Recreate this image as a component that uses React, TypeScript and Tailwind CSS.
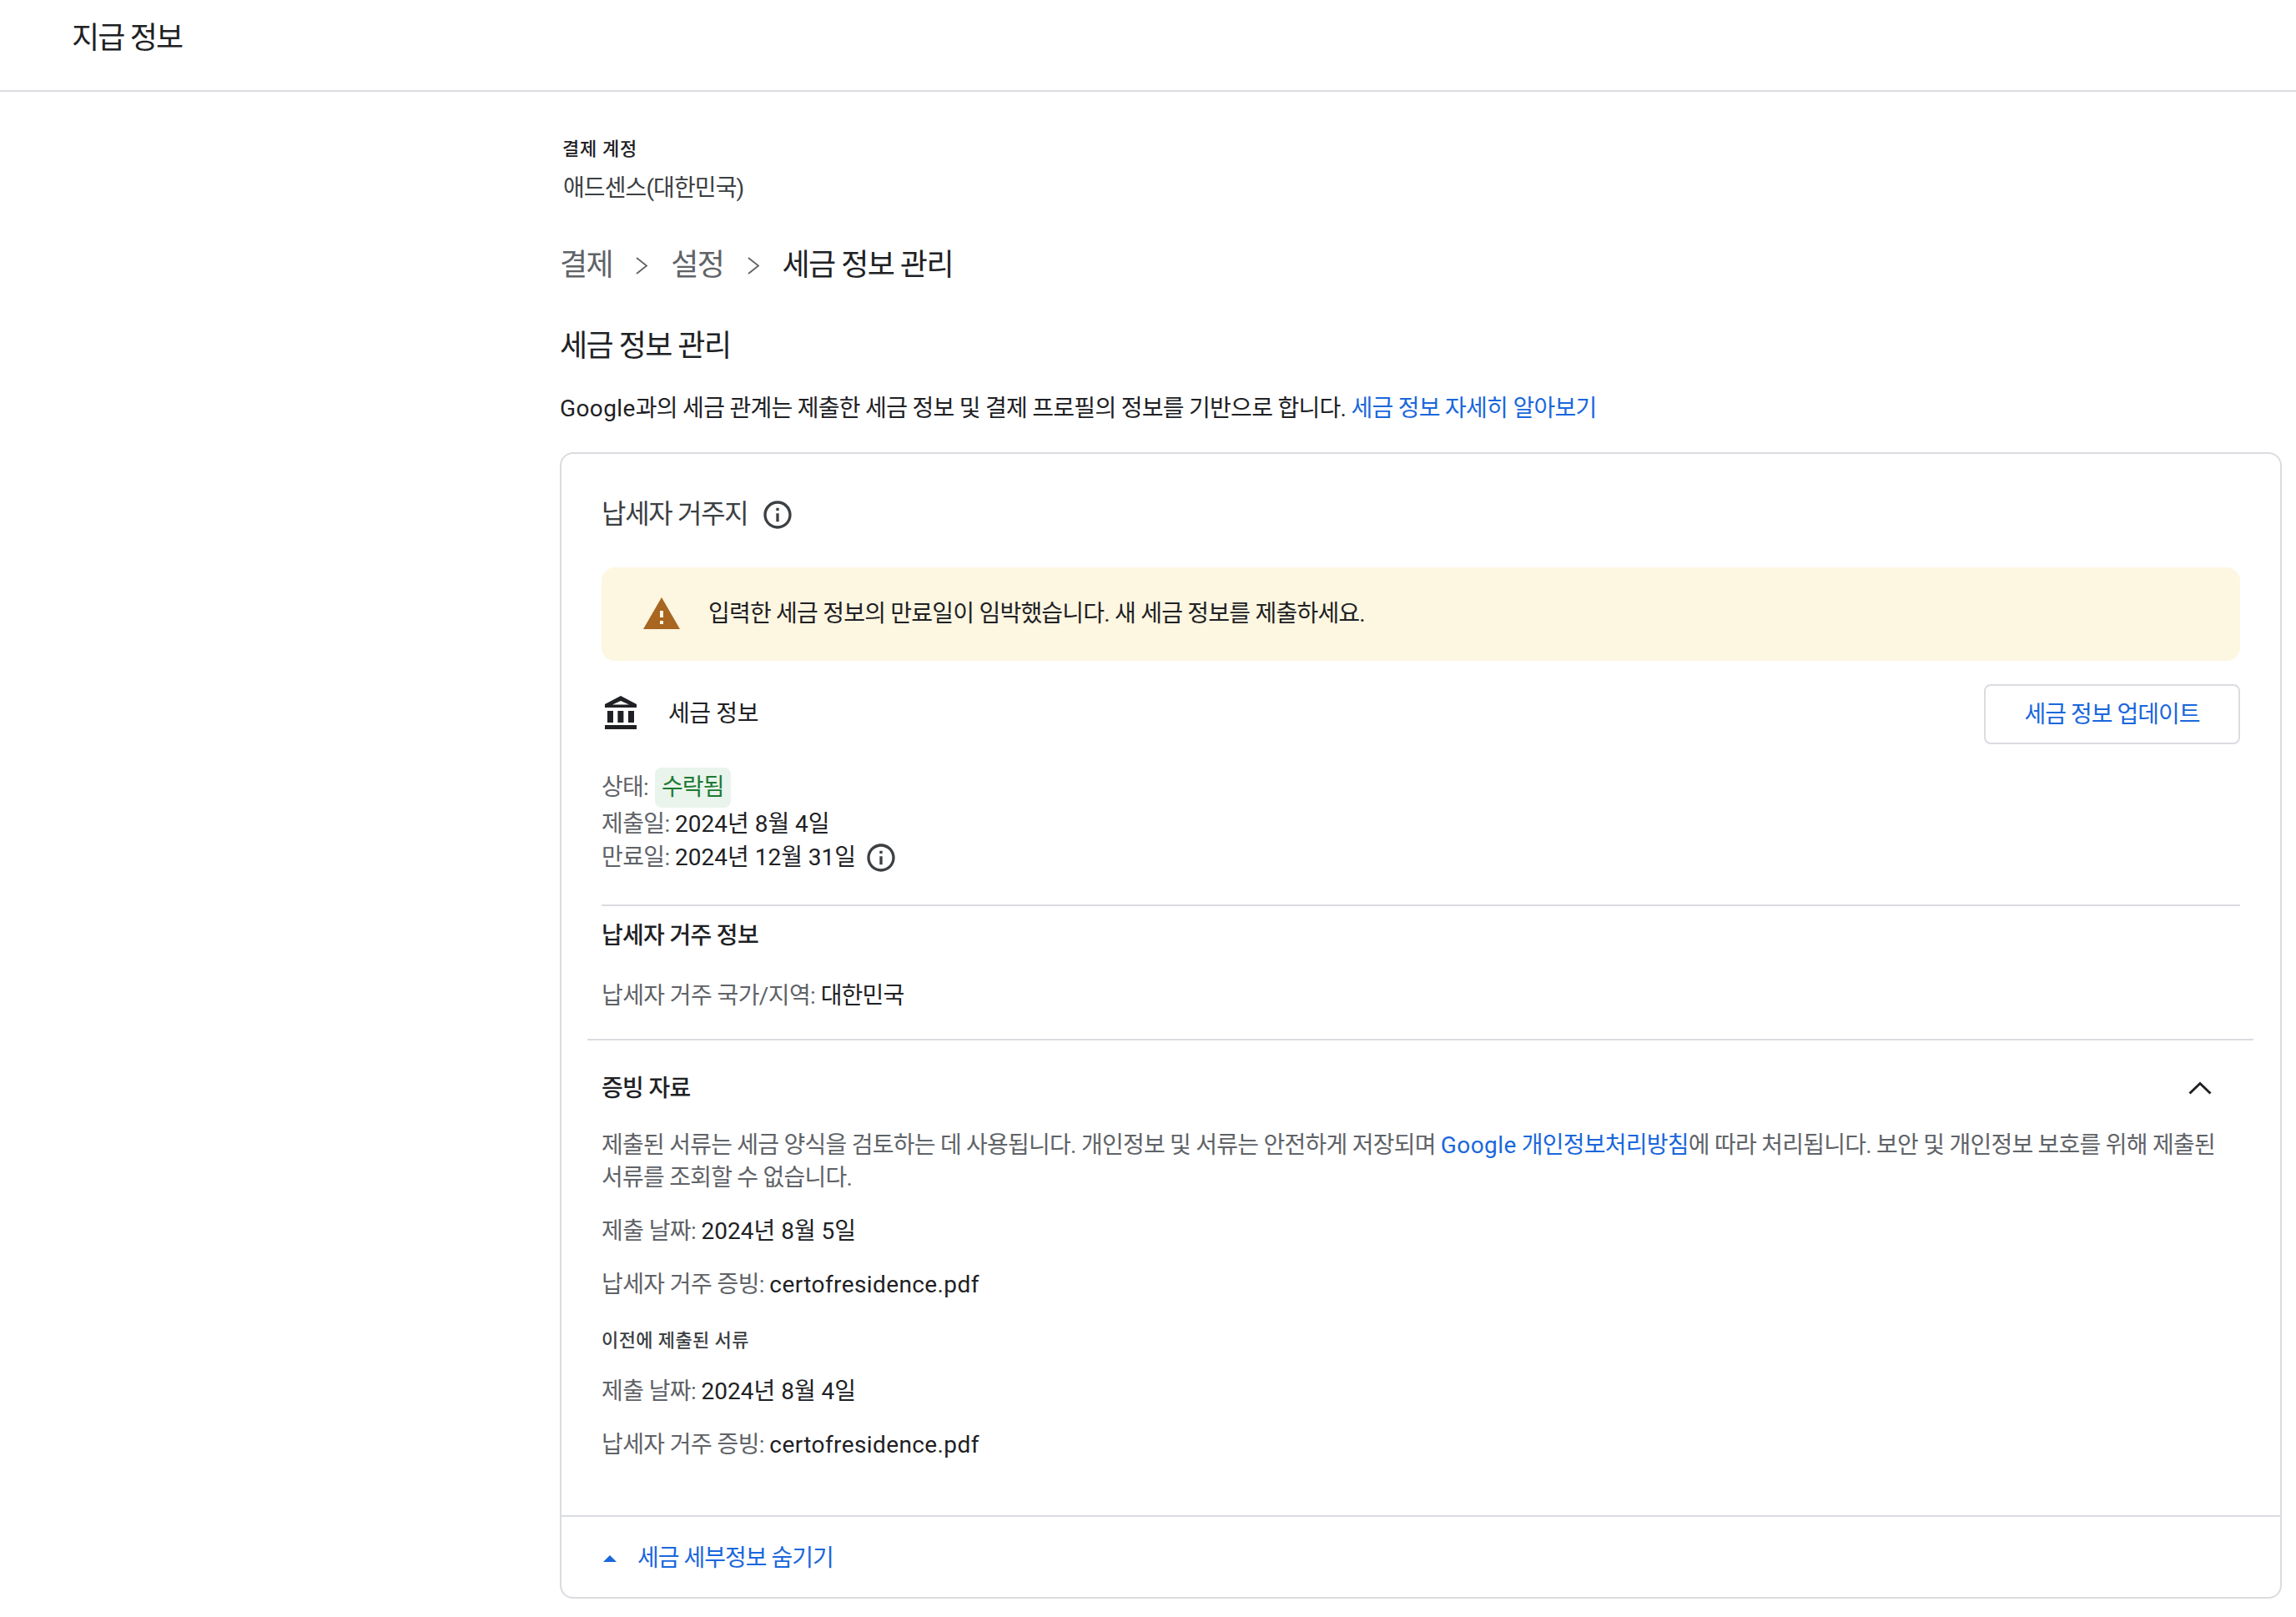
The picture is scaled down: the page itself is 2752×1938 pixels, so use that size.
const font = { fontFamily: 'Roboto, "Noto Sans CJK KR", sans-serif' };

function InfoIcon({ className }: { className: string }) {
  return (
    <svg className={className} viewBox="0 0 24 24" fill="#3c4043">
      <path d="M11 7h2v2h-2zm0 4h2v6h-2zm1-9C6.480 2 2 6.480 2 12s4.480 10 10 10 10-4.480 10-10S17.520 2 12 2zm0 18c-4.410 0-8-3.590-8-8s3.590-8 8-8 8 3.590 8 8-3.590 8-8 8z" />
    </svg>
  );
}

function Chevron() {
  return (
    <svg className="w-[24px] h-[24px] mx-[23px]" viewBox="0 0 24 24" fill="none" stroke="#5f6368" strokeWidth="1.8">
      <path d="M6 3l12 9.500L6 22" />
    </svg>
  );
}

function Row({ label, value, kind }: { label: string; value: string; kind?: 'latin' | 'hangul' }) {
  const valueClass =
    kind === 'latin'
      ? 'text-[#202124] tracking-[0.4px]'
      : kind === 'hangul'
        ? 'text-[#202124] tracking-[-0.8px]'
        : 'text-[#202124] tracking-[0px]';
  return (
    <div className="text-[28px] leading-[40px] text-[#5f6368] tracking-[-0.6px]">
      {label} <span className={valueClass}>{value}</span>
    </div>
  );
}

export default function App() {
  return (
    <div style={font} className="w-[2752px] h-[1938px] overflow-hidden bg-white text-[#202124]">
      <header className="h-[110px] border-b-2 border-[#dadce0] pl-[86px] pt-[21px]">
        <h1 className="text-[36px] leading-[50px] font-normal tracking-[-1.8px]">지급 정보</h1>
      </header>
      <main className="pl-[671px] pr-[17px]">
        <div className="pl-[3px] pt-[55px] text-[22px] leading-[28px] font-medium tracking-[0.7px]">결제 계정</div>
        <div className="pl-[4px] pt-[15px] text-[28px] leading-[36px] text-[#3c4043] tracking-[-0.9px]">애드센스(대한민국)</div>
        <nav className="flex items-center pt-[49px] text-[36px] leading-[50px] tracking-[-1.5px]">
          <span className="text-[#5f6368]">결제</span>
          <Chevron />
          <span className="text-[#5f6368]">설정</span>
          <Chevron />
          <span>세금 정보 관리</span>
        </nav>
        <h2 className="pt-[47px] text-[36px] leading-[50px] font-normal tracking-[-1.5px]">세금 정보 관리</h2>
        <p className="pt-[30px] text-[28px] leading-[40px] tracking-[-0.72px]">
          <span className="tracking-[0.4px]">Google</span>과의 세금 관계는 제출한 세금 정보 및 결제 프로필의 정보를 기반으로 합니다.{' '}
          <a className="text-[#1a67dc]">세금 정보 자세히 알아보기</a>
        </p>
        <section className="mt-[32px] h-[1374px] rounded-[16px] border-2 border-[#dadce0] flex flex-col">
          <div className="flex-1 pt-[49px]">
            <div className="px-[48px] flex items-center gap-[16px] text-[32px] leading-[46px] text-[#3c4043] tracking-[-1.3px]">
              납세자 거주지
              <InfoIcon className="w-[40px] h-[40px] mt-[2px]" />
            </div>
            <div className="mx-[48px] mt-[41px] h-[112px] rounded-[16px] bg-[#fdf6e1] flex items-center pl-[48px] text-[28px] tracking-[-0.78px]">
              <svg className="w-[48px] h-[48px]" viewBox="0 0 24 24" fill="#a86620">
                <path d="M1 21h22L12 2 1 21zm12-3h-2v-2h2v2zm0-4h-2v-4h2v4z" />
              </svg>
              <span className="ml-[32px]">입력한 세금 정보의 만료일이 임박했습니다. 새 세금 정보를 제출하세요.</span>
            </div>
            <div className="mx-[48px] mt-[28px] h-[72px] flex items-center">
              <svg className="w-[48px] h-[48px]" viewBox="0 0 24 24" fill="#202124">
                <path fillRule="evenodd" d="M3.500 10H7v7H3.500zM9.700 10h3.500v7H9.700zM16 10h3.500v7H16zM2 18.500h19V21H2zM11.500 1 21 6v2H2V6l9.500-5zm0 3L6.500 6.300h10L11.500 4z" />
              </svg>
              <span className="ml-[32px] text-[28px] tracking-[-0.4px]">세금 정보</span>
              <button className="ml-auto w-[307px] h-[72px] pt-[1px] rounded-[8px] border-2 border-[#dadce0] text-[28px] text-[#1a67dc] tracking-[-1px]">세금 정보 업데이트</button>
            </div>
            <div className="mx-[48px] pt-[28px]">
              <div className="flex items-center text-[28px] text-[#5f6368] h-[48px] tracking-[-0.8px]">
                상태:
                <span className="ml-[8px] h-[48px] px-[8px] rounded-[8px] bg-[#e9f4ec] text-[#1e7a34] flex items-center">수락됨</span>
              </div>
              <Row label="제출일:" value="2024년 8월 4일" />
              <div className="flex items-center gap-[10px]">
                <Row label="만료일:" value="2024년 12월 31일" />
                <InfoIcon className="w-[40px] h-[40px]" />
              </div>
            </div>
            <div className="mx-[48px] mt-[36px] border-t-2 border-[#dadce0]" />
            <div className="mx-[48px] pt-[16px] text-[28px] leading-[40px] font-medium tracking-[-0.7px]">납세자 거주 정보</div>
            <div className="mx-[48px] pt-[32px]">
              <Row label="납세자 거주 국가/지역:" value="대한민국" kind="hangul" />
            </div>
            <div className="ml-[31px] mr-[32px] mt-[31px] border-t-2 border-[#dadce0]" />
            <div className="ml-[48px] mr-[82px] pt-[38px] flex items-center justify-between text-[28px] leading-[40px] font-medium tracking-[-0.7px]">
              증빙 자료
              <svg className="w-[28px] h-[16px] -mt-[2px]" viewBox="0 0 28 16" fill="none" stroke="#202124" strokeWidth="3">
                <path d="M1.500 14.500 14 2.500l12.500 12" />
              </svg>
            </div>
            <p className="mx-[48px] pt-[28px] text-[28px] leading-[39px] text-[#5f6368] tracking-[-0.76px] break-keep">
              제출된 서류는 세금 양식을 검토하는 데 사용됩니다. 개인정보 및 서류는 안전하게 저장되며{' '}
              <a className="text-[#1a67dc]"><span className="tracking-[0.4px]">Google</span> 개인정보처리방침</a>에 따라 처리됩니다. 보안 및 개인정보 보호를 위해 제출된 서류를 조회할 수 없습니다.
            </p>
            <div className="mx-[48px] pt-[25px]"><Row label="제출 날짜:" value="2024년 8월 5일" /></div>
            <div className="mx-[48px] pt-[24px]"><Row label="납세자 거주 증빙:" value="certofresidence.pdf" kind="latin" /></div>
            <div className="mx-[48px] pt-[33px] text-[22px] leading-[28px] font-medium text-[#3c4043] tracking-[0.4px]">이전에 제출된 서류</div>
            <div className="mx-[48px] pt-[27px]"><Row label="제출 날짜:" value="2024년 8월 4일" /></div>
            <div className="mx-[48px] pt-[24px]"><Row label="납세자 거주 증빙:" value="certofresidence.pdf" kind="latin" /></div>
          </div>
          <div className="h-[98px] border-t-2 border-[#dadce0] flex items-center pl-[48px] pt-[3px] text-[28px] text-[#1a67dc] tracking-[-1px]">
            <svg className="w-[16px] h-[10px] ml-[2px]" viewBox="0 0 16 10" fill="#1a67dc">
              <path d="M8 1 16 9H0z" />
            </svg>
            <span className="ml-[25px]">세금 세부정보 숨기기</span>
          </div>
        </section>
      </main>
    </div>
  );
}
